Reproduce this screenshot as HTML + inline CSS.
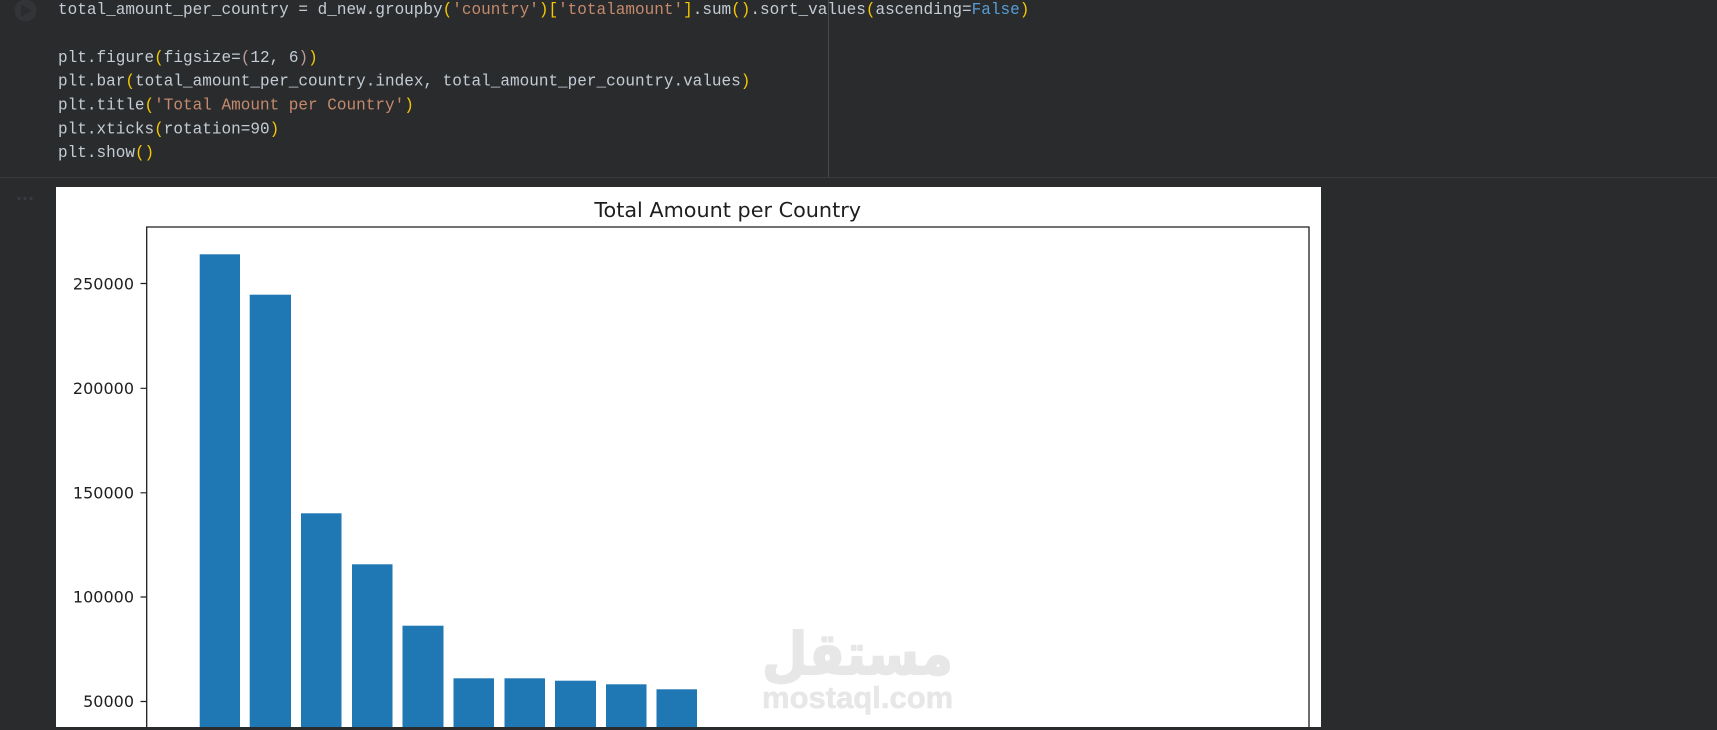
<!DOCTYPE html>
<html>
<head>
<meta charset="utf-8">
<title>Total Amount per Country</title>
<style>
html,body{margin:0;padding:0;width:1717px;height:730px;overflow:hidden;background:#2a2b2d}
svg{display:block;position:absolute;left:0;top:0}
.c{font-family:"Liberation Mono",monospace;font-size:17px;fill:#c3ccd4;white-space:pre}
.s{fill:#c58a6c}.p{fill:#f5c800}.o{fill:#bd9a9a}.n{fill:#c3ccd4}.k{fill:#569cd6}
.t{font-family:"DejaVu Sans",sans-serif;font-size:16px;fill:#1e1e1e}
</style>
</head>
<body>
<svg width="1717" height="730" viewBox="0 0 1717 730" xmlns="http://www.w3.org/2000/svg">
<rect width="1717" height="730" fill="#2a2b2d"/>
<circle cx="25.5" cy="10.5" r="11" fill="#333437"/>
<path d="M21 4 L32 10.5 L21 17 Z" fill="#2b2c2e"/>
<rect x="828" y="0" width="1" height="177" fill="#4a4b4d"/>
<rect x="0" y="177" width="1717" height="1" fill="#3a3b3d"/>
<circle cx="19" cy="198.5" r="1.600" fill="#3a3b41"/>
<circle cx="25" cy="198.5" r="1.600" fill="#3a3b41"/>
<circle cx="31" cy="198.5" r="1.600" fill="#3a3b41"/>

<g transform="translate(58,0) scale(.943,1)">
<text class="c" y="14" xml:space="preserve">total_amount_per_country = d_new.groupby<tspan class="p">(</tspan><tspan class="s">'country'</tspan><tspan class="p">)[</tspan><tspan class="s">'totalamount'</tspan><tspan class="p">]</tspan>.sum<tspan class="p">()</tspan>.sort_values<tspan class="p">(</tspan>ascending=<tspan class="k">False</tspan><tspan class="p">)</tspan></text>
<text class="c" y="62" xml:space="preserve">plt.figure<tspan class="p">(</tspan>figsize=<tspan class="o">(</tspan><tspan class="n">12</tspan>, <tspan class="n">6</tspan><tspan class="o">)</tspan><tspan class="p">)</tspan></text>
<text class="c" y="85.700" xml:space="preserve">plt.bar<tspan class="p">(</tspan>total_amount_per_country.index, total_amount_per_country.values<tspan class="p">)</tspan></text>
<text class="c" y="109.500" xml:space="preserve">plt.title<tspan class="p">(</tspan><tspan class="s">'Total Amount per Country'</tspan><tspan class="p">)</tspan></text>
<text class="c" y="133.300" xml:space="preserve">plt.xticks<tspan class="p">(</tspan>rotation=<tspan class="n">90</tspan><tspan class="p">)</tspan></text>
<text class="c" y="157.200" xml:space="preserve">plt.show<tspan class="p">()</tspan></text>
</g>

<rect x="56" y="187" width="1265" height="540" fill="#ffffff"/>
<text x="727.700" y="217" text-anchor="middle" font-family="'DejaVu Sans',sans-serif" font-size="20.750" fill="#1e1e1e">Total Amount per Country</text>

<g fill="#1f77b4">
<rect x="199.700" y="254.300" width="40.300" height="472.700"/>
<rect x="249.700" y="294.700" width="41.300" height="432.300"/>
<rect x="301" y="513.300" width="40.500" height="213.700"/>
<rect x="352" y="564.300" width="40.500" height="162.700"/>
<rect x="402.500" y="625.700" width="41" height="101.300"/>
<rect x="453.500" y="678.300" width="40.500" height="48.700"/>
<rect x="504.500" y="678.300" width="40.500" height="48.700"/>
<rect x="555" y="680.700" width="41" height="46.300"/>
<rect x="606" y="684.300" width="40.500" height="42.700"/>
<rect x="656.500" y="689.300" width="40.500" height="37.700"/>
</g>

<path d="M146.700 727V227H1309V727" fill="none" stroke="#1e1e1e" stroke-width="1.300"/>
<path d="M140.500 283.500H146.500M140.500 388.300H146.500M140.500 492.800H146.500M140.500 597H146.500M140.500 701.500H146.500" stroke="#1e1e1e" stroke-width="1.200"/>
<text class="t" x="134" y="289.500" text-anchor="end">250000</text>
<text class="t" x="134" y="394" text-anchor="end">200000</text>
<text class="t" x="134" y="498.300" text-anchor="end">150000</text>
<text class="t" x="134" y="602.500" text-anchor="end">100000</text>
<text class="t" x="134" y="707" text-anchor="end">50000</text>

<g transform="translate(857.500,674) scale(.9,1)">
<text x="0" y="0" text-anchor="middle" font-family="'DejaVu Sans',sans-serif" font-weight="bold" font-size="58" fill="#e7e7e7" stroke="#e7e7e7" stroke-width="2" stroke-linejoin="round">مستقل</text>
</g>
<text x="762" y="708" font-family="'Liberation Sans',sans-serif" font-weight="bold" font-size="31" fill="#e7e7e7" stroke="#e7e7e7" stroke-width=".6" stroke-linejoin="round">mostaql.com</text>
</svg>
</body>
</html>
